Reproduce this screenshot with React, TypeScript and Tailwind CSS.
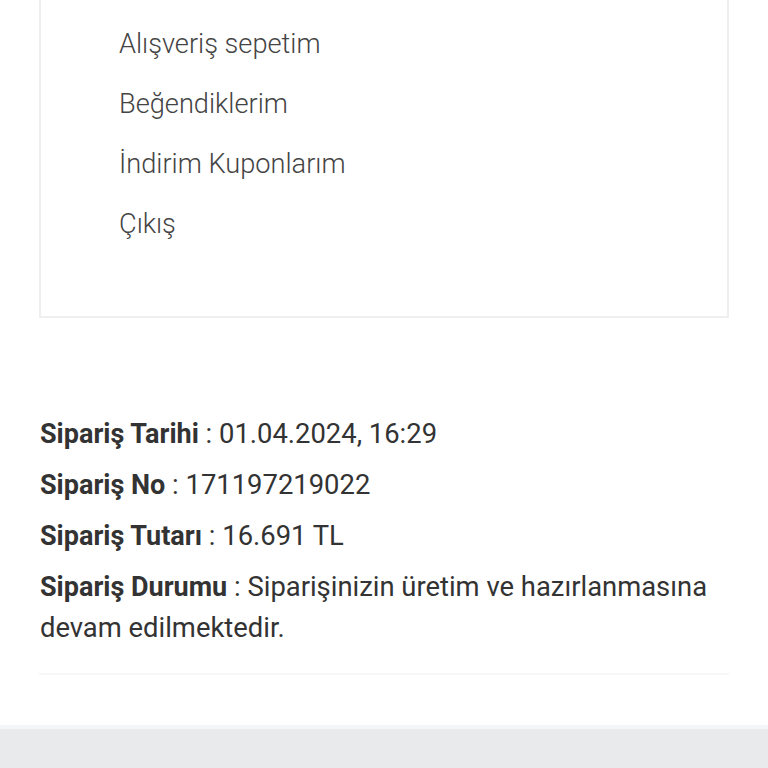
import React from "react";

export default function App() {
  const menu = ["Alışveriş sepetim", "Beğendiklerim", "İndirim Kuponlarım", "Çıkış"];
  const info: [string, string][] = [
    ["Sipariş Tarihi", "01.04.2024, 16:29"],
    ["Sipariş No", "171197219022"],
    ["Sipariş Tutarı", "16.691 TL"],
    ["Sipariş Durumu", "Siparişinizin üretim ve hazırlanmasına devam edilmektedir."],
  ];
  return (
    <div
      className="w-[768px] h-[768px] overflow-hidden bg-white flex flex-col"
      style={{ fontFamily: "Roboto, 'Noto Sans', sans-serif" }}
    >
      <div className="px-[39px]">
        <div className="-mt-[10px] border-2 border-[#efefef] pt-[22px] pb-[62px] pl-[78px]">
          {menu.map((m) => (
            <div key={m} className="h-[60px] flex items-center text-[27.2px] font-light text-[#444444]">
              {m}
            </div>
          ))}
        </div>
      </div>
      <div className="pl-[40px] pt-[96px] pr-[39px]">
        {info.map(([k, v]) => (
          <p key={k} className="text-[27.4px] leading-[41px] mb-[10px] text-[#333333]">
            <span className="font-bold text-[27px]">{k}</span> : {v}
          </p>
        ))}
      </div>
      <div className="mx-[39px] mt-[14px] h-[2px] bg-[#f7f7f7]" />
      <div className="flex-1" />
      <div className="h-[43px] bg-[#e8eaec] border-t-4 border-[#f4f5f6]" />
    </div>
  );
}
